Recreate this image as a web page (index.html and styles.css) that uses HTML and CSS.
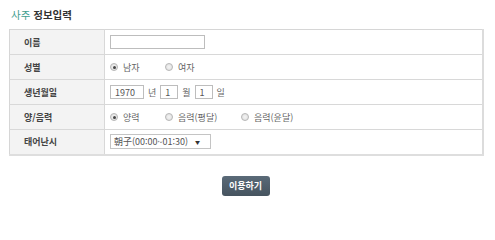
FILE: index.html
```html
<!DOCTYPE html>
<html lang="ko">
<head>
<meta charset="utf-8">
<link rel="stylesheet" href="styles.css">
</head>
<body>
<div class="page">
  <h2 class="title"><span class="accent">사주</span> 정보입력</h2>
  <table class="form">
    <tr>
      <th>이름</th>
      <td><input class="text name" type="text"></td>
    </tr>
    <tr>
      <th>성별</th>
      <td>
        <div class="row">
          <label class="opt w55"><input type="radio" name="sex" checked>남자</label>
          <label class="opt"><input type="radio" name="sex">여자</label>
        </div>
      </td>
    </tr>
    <tr>
      <th>생년월일</th>
      <td>
        <div class="row">
          <input class="text year" type="text" value="1970"><span class="unit">년</span>
          <input class="text small" type="text" value="1"><span class="unit">월</span>
          <input class="text small" type="text" value="1"><span class="unit">일</span>
        </div>
      </td>
    </tr>
    <tr>
      <th>양/음력</th>
      <td>
        <div class="row">
          <label class="opt w55"><input type="radio" name="cal" checked>양력</label>
          <label class="opt w76"><input type="radio" name="cal">음력(평달)</label>
          <label class="opt"><input type="radio" name="cal">음력(윤달)</label>
        </div>
      </td>
    </tr>
    <tr>
      <th>태어난시</th>
      <td>
        <div class="select"><span>朝子(00:00~01:30)</span><span class="arrow">▼</span></div>
      </td>
    </tr>
  </table>
  <div class="actions">
    <button class="btn" type="button">이용하기</button>
  </div>
</div>
</body>
</html>
```
FILE: styles.css
```css
* { box-sizing: border-box; }
html, body { margin: 0; padding: 0; background: #fff; }
body {
  font-family: "Noto Sans CJK KR", "Noto Sans", sans-serif;
  font-size: 9px;
  color: #555;
}
.page { padding: 8px 11px 0 9px; }
.title {
  margin: 0 0 0 2px;
  height: 20px;
  font-size: 10.5px;
  font-weight: bold;
  color: #333;
  line-height: 14px;
}
.title .accent { color: #3f9e8f; font-weight: normal; }
.form {
  width: 475px;
  border-collapse: collapse;
  border-top: 1px solid #d6d6d6;
  border-bottom: 2px solid #dedede;
  border-left: 1px solid #d6d6d6;
  border-right: 2px solid #dcdcdc;
  margin-top: 1px;
}
.form tr { height: 25px; }
.form th, .form td {
  border-bottom: 1px solid #d8d8d8;
  padding: 0;
  vertical-align: middle;
}
.form th {
  width: 95px;
  background: #f3f3f3;
  border-right: 1px solid #d8d8d8;
  text-align: left;
  padding-left: 14px;
  font-size: 9px;
  font-weight: bold;
  color: #444;
}
.form td { padding-left: 5px; background: #fff; }
.row { display: flex; align-items: center; }
.text {
  height: 14px;
  border: 1px solid #bdbdbd;
  padding: 0 0 0 4px;
  font-family: inherit;
  font-size: 9px;
  color: #555;
  vertical-align: middle;
  outline: none;
}
.name { width: 95px; }
.year { width: 34px; }
.small { width: 18px; }
.unit { margin: 0 4px 0 4px; color: #666; }
.opt {
  display: inline-flex;
  align-items: center;
  gap: 5px;
  color: #666;
}
.w55 { width: 55px; }
.w76 { width: 76px; }
.opt input {
  appearance: none;
  -webkit-appearance: none;
  margin: 0;
  width: 8px;
  height: 8px;
  border-radius: 50%;
  border: 1px solid #b8b8b8;
  background: radial-gradient(circle, #f4f4f4 0, #dcdcdc 100%);
  position: relative;
}
.opt input:checked::after {
  content: "";
  position: absolute;
  left: 1.5px;
  top: 1.5px;
  width: 3px;
  height: 3px;
  border-radius: 50%;
  background: #444;
}
.select {
  display: inline-flex;
  align-items: center;
  gap: 7px;
  width: 101px;
  height: 15px;
  border: 1px solid #c4c4c4;
  padding: 0 3px;
  font-size: 9px;
  color: #555;
  background: #fff;
  vertical-align: middle;
}
.select .arrow { font-size: 5px; color: #333; }
.actions { display: flex; justify-content: center; padding-top: 20px; margin-left: -2px; }
.btn {
  width: 48px;
  height: 20px;
  border: 0;
  border-radius: 3px;
  background: linear-gradient(#5a6a78, #46545f);
  color: #fff;
  font-family: inherit;
  font-size: 9px;
  font-weight: bold;
  padding: 0;
}
```
